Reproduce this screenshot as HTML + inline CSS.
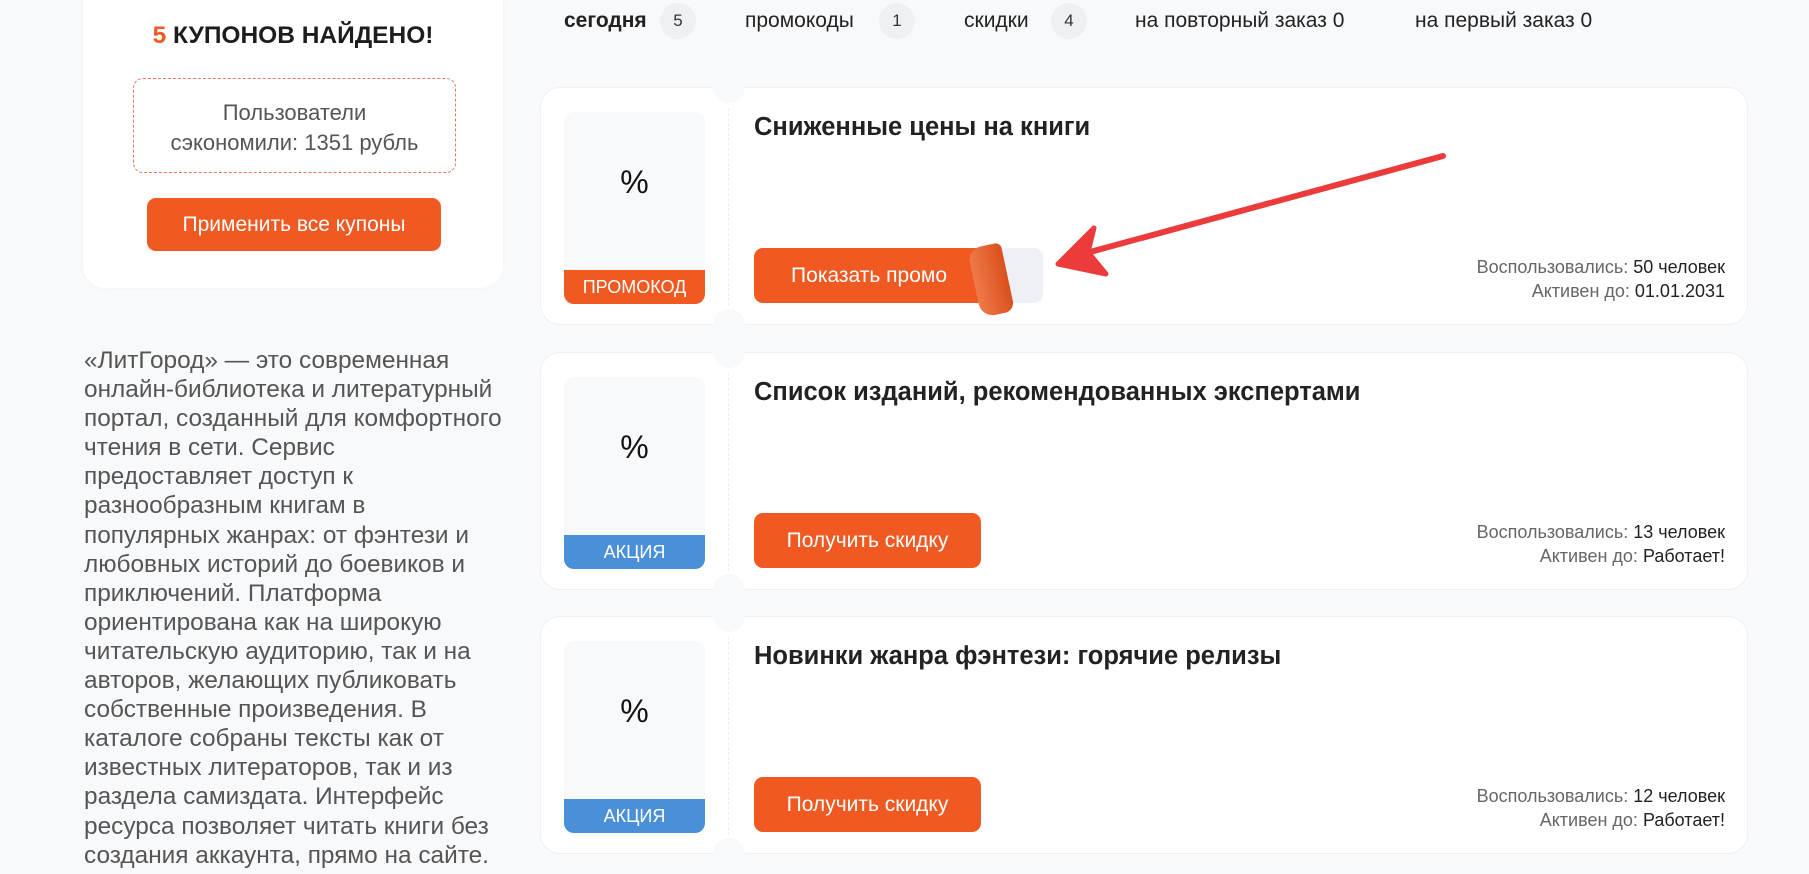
<!DOCTYPE html>
<html><head><meta charset="utf-8"><style>
*{box-sizing:border-box;margin:0;padding:0}
body{width:1809px;height:874px;background:#f8f9fb;font-family:"Liberation Sans",Arial,sans-serif;position:relative;overflow:hidden;color:#222}
.abs{position:absolute}
.panel{left:83px;top:-20px;width:420px;height:308px;background:#fff;border-radius:22px;box-shadow:0 0 4px rgba(0,0,0,.04)}
.t{left:83px;top:22px;width:420px;text-align:center;font-weight:bold;font-size:24.5px;color:#1d1d1d}
.t span{color:#f05a22}
.dash{left:133px;top:78px;width:323px;height:95px;border:1px dashed #e07a60;border-radius:10px;text-align:center;font-size:22px;color:#555;padding-top:19px;line-height:30px}
.btn{background:#f05a22;color:#fff;border-radius:9px;text-align:center}
.desc{left:84px;top:346px;width:440px;font-size:24.4px;line-height:29.1px;color:#555;white-space:nowrap}
.tab{top:8px;font-size:21px;color:#222;line-height:26px}
.badge{top:3px;width:36px;height:36px;border-radius:50%;background:#eff0f4;font-size:17px;text-align:center;line-height:36px;color:#333}
.card{left:540px;width:1208px;height:238px;background:#fff;border-radius:20px;border:1px solid #eef0f4}
.lb{position:absolute;left:23px;top:24px;width:141px;height:192px;background:#f8f9fb;border-radius:10px;overflow:hidden}
.pc{position:absolute;top:52px;width:100%;text-align:center;font-size:32px;color:#111}
.lab{position:absolute;bottom:0;left:0;width:100%;height:34px;color:#fff;text-align:center;line-height:34px;font-size:18px}
.div{position:absolute;left:187px;top:20px;height:198px;border-left:1px dashed #eceef2}
.notch{position:absolute;left:172px;width:32px;height:32px;border-radius:50%;background:#f8f9fb}
.ttl{position:absolute;left:213px;top:25px;font-size:25.5px;color:#222;font-weight:bold}
.cb{position:absolute;left:213px;top:160px;width:227px;height:55px;line-height:55px;font-size:21px}
.info{position:absolute;right:22px;top:167px;text-align:right;font-size:18px;line-height:24px;color:#666}
.info b{font-weight:normal;color:#222}
</style></head><body>
<div class="abs panel"></div>
<div class="abs t"><span>5</span> КУПОНОВ НАЙДЕНО!</div>
<div class="abs dash">Пользователи<br>сэкономили: 1351 рубль</div>
<div class="abs btn" style="left:147px;top:198px;width:294px;height:53px;line-height:53px;font-size:21px">Применить все купоны</div>
<div class="abs desc">«ЛитГород» — это современная<br>онлайн-библиотека и литературный<br>портал, созданный для комфортного<br>чтения в сети. Сервис<br>предоставляет доступ к<br>разнообразным книгам в<br>популярных жанрах: от фэнтези и<br>любовных историй до боевиков и<br>приключений. Платформа<br>ориентирована как на широкую<br>читательскую аудиторию, так и на<br>авторов, желающих публиковать<br>собственные произведения. В<br>каталоге собраны тексты как от<br>известных литераторов, так и из<br>раздела самиздата. Интерфейс<br>ресурса позволяет читать книги без<br>создания аккаунта, прямо на сайте.</div>

<div class="abs tab" style="left:564px;font-weight:bold">сегодня</div><div class="abs badge" style="left:660px">5</div>
<div class="abs tab" style="left:745px">промокоды</div><div class="abs badge" style="left:879px">1</div>
<div class="abs tab" style="left:964px">скидки</div><div class="abs badge" style="left:1051px">4</div>
<div class="abs tab" style="left:1135px">на повторный заказ 0</div>
<div class="abs tab" style="left:1415px">на первый заказ 0</div>

<div class="abs card" style="top:87px">
<div class="lb"><div class="pc">%</div><div class="lab" style="background:#f05a22">ПРОМОКОД</div></div>
<div class="div"></div><div class="notch" style="top:-17px"></div><div class="notch" style="bottom:-17px"></div>
<div class="ttl">Сниженные цены на книги</div>
<div class="cb" style="width:289px;background:#eef0f5;border-radius:9px"></div>
<div class="cb btn" style="width:227px;border-radius:9px 0 0 9px;padding-right:34px;text-align:right">Показать промо</div>
<div style="position:absolute;left:433px;top:157px;width:34px;height:70px;background:linear-gradient(90deg,#f07a4a,#d9501c);border-radius:14px 6px 10px 14px;transform:rotate(-12deg)"></div>
<div class="info">Воспользовались: <b>50 человек</b><br>Активен до: <b>01.01.2031</b></div>
</div>

<div class="abs card" style="top:352px">
<div class="lb"><div class="pc">%</div><div class="lab" style="background:#4a90d9">АКЦИЯ</div></div>
<div class="div"></div><div class="notch" style="top:-17px"></div><div class="notch" style="bottom:-17px"></div>
<div class="ttl">Список изданий, рекомендованных экспертами</div>
<div class="cb btn">Получить скидку</div>
<div class="info">Воспользовались: <b>13 человек</b><br>Активен до: <b>Работает!</b></div>
</div>

<div class="abs card" style="top:616px">
<div class="lb"><div class="pc">%</div><div class="lab" style="background:#4a90d9">АКЦИЯ</div></div>
<div class="div"></div><div class="notch" style="top:-17px"></div><div class="notch" style="bottom:-17px"></div>
<div class="ttl">Новинки жанра фэнтези: горячие релизы</div>
<div class="cb btn">Получить скидку</div>
<div class="info">Воспользовались: <b>12 человек</b><br>Активен до: <b>Работает!</b></div>
</div>

<svg class="abs" style="left:0;top:0" width="1809" height="874">
<line x1="1443" y1="156" x2="1090" y2="252" stroke="#ec3b3b" stroke-width="6" stroke-linecap="round"/>
<polygon points="1058,264 1094,228 1088,252 1106,274" fill="#ec3b3b" stroke="#ec3b3b" stroke-width="5" stroke-linejoin="round"/>
</svg>
</body></html>
